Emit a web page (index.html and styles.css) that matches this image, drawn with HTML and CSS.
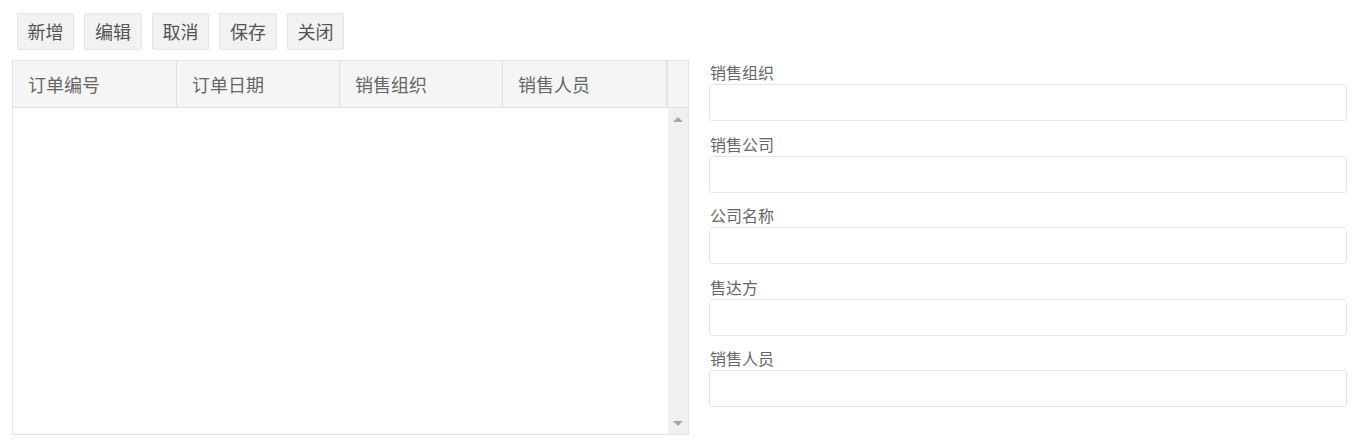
FILE: index.html
```html
<!DOCTYPE html>
<html lang="zh-CN">
<head>
<meta charset="utf-8">
<title>订单</title>
<link rel="stylesheet" href="styles.css">
</head>
<body>
<div class="toolbar">
  <button class="btn">新增</button>
  <button class="btn">编辑</button>
  <button class="btn">取消</button>
  <button class="btn">保存</button>
  <button class="btn">关闭</button>
</div>
<div class="main">
  <div class="grid">
    <div class="grid-head">
      <div class="th">订单编号</div>
      <div class="th">订单日期</div>
      <div class="th">销售组织</div>
      <div class="th">销售人员</div>
      <div class="th th-gutter"></div>
    </div>
    <div class="grid-body">
      <div class="rows"></div>
      <div class="scrollbar">
        <span class="arrow arrow-up"></span>
        <span class="arrow arrow-down"></span>
      </div>
    </div>
  </div>
  <form class="form">
    <div class="field"><label class="label">销售组织</label><input class="input" type="text"></div>
    <div class="field"><label class="label">销售公司</label><input class="input" type="text"></div>
    <div class="field"><label class="label">公司名称</label><input class="input" type="text"></div>
    <div class="field"><label class="label">售达方</label><input class="input" type="text"></div>
    <div class="field"><label class="label">销售人员</label><input class="input" type="text"></div>
  </form>
</div>
</body>
</html>
```
FILE: styles.css
```css
* { box-sizing: border-box; }
html, body { margin: 0; background: #fff; }
body {
  font-family: "Noto Sans CJK SC", "Noto Sans", sans-serif;
  color: #666;
}
.toolbar {
  display: flex;
  gap: 10px;
  padding: 13px 0 0 17px;
  height: 60px;
}
.btn {
  height: 37px;
  padding: 0;
  width: 57px;
  white-space: nowrap;
  font-family: inherit;
  font-size: 18px;
  line-height: 35px;
  color: #555;
  background: #f2f2f2;
  border: 1px solid #e4e4e4;
  border-radius: 2px;
}
.btn:nth-child(2), .btn:nth-child(4) { width: 58px; }
.main {
  display: flex;
  gap: 20px;
  padding-left: 12px;
}
.grid {
  width: 677px;
  height: 375px;
  border: 1px solid #e3e3e3;
  display: flex;
  flex-direction: column;
}
.grid-head {
  display: grid;
  grid-template-columns: 164px 163px 163px 165px 20px;
  height: 47px;
  background: #f5f5f5;
  border-bottom: 1px solid #e0e0e0;
}
.th {
  font-size: 18px;
  line-height: 46px;
  padding-left: 15px;
  color: #666;
  border-right: 1px solid #e0e0e0;
}
.th:nth-child(4) { border-right: 2px solid #e4e4e4; }
.th-gutter { border-right: none; padding: 0; }
.grid-body {
  flex: 1;
  display: flex;
}
.rows { flex: 1; }
.scrollbar {
  width: 20px;
  background: #f0f0f0;
  display: flex;
  flex-direction: column;
  justify-content: space-between;
  align-items: center;
  padding: 9px 0 8px;
}
.arrow {
  width: 0;
  height: 0;
  border-left: 5px solid transparent;
  border-right: 5px solid transparent;
}
.arrow-up { border-bottom: 5px solid #a6a6a6; }
.arrow-down { border-top: 5px solid #a6a6a6; }
.form {
  width: 638px;
  margin: 0;
  display: flex;
  flex-direction: column;
  gap: 10.5px;
}
.field { display: flex; flex-direction: column; }
.label {
  font-size: 16px;
  line-height: 24px;
  height: 24px;
  color: #666;
  padding-left: 1px;
}
.input {
  height: 37px;
  border: 1px solid #e6e6e6;
  border-radius: 3px;
  background: #fff;
  margin: 0;
  outline: none;
}
```
